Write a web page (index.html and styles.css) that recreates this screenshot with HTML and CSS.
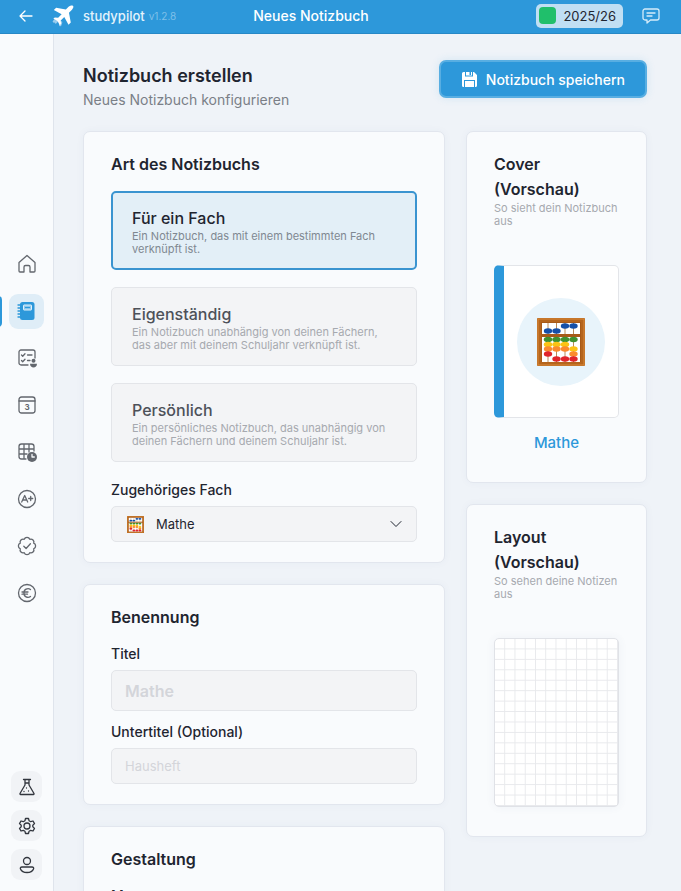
FILE: index.html
```
<!DOCTYPE html>
<html lang="de">
<head>
    <meta charset="UTF-8">
    <meta name="viewport" content="width=device-width, initial-scale=1">
    <title>Neues Notizbuch - studypilot</title>
    <link rel="stylesheet" href="styles.css">
</head>
<body>

<!-- shared abacus drawing -->
<svg class="sprite" aria-hidden="true">
    <symbol id="abacus" viewBox="0 0 48 48">
        <rect width="48" height="48" rx="1" fill="#b5651d"/>
        <rect x="1" y="1" width="46" height="46" fill="none" stroke="#d98a3a"/>
        <rect x="4" y="4" width="40" height="40" fill="#a85a18"/>
        <rect x="5" y="5" width="38" height="11" fill="#fff"/>
        <rect x="5" y="19" width="38" height="25" fill="#fff"/>
        <path d="M11 5v11M19.500 5v11M28 5v11M36.500 5v11M11 19v25M19.500 19v25M28 19v25M36.500 19v25" stroke="#b98b5a"/>
        <g fill="#1550a8">
            <ellipse cx="11" cy="13" rx="4.200" ry="2.700"/><ellipse cx="19.500" cy="13" rx="4.200" ry="2.700"/>
            <ellipse cx="28" cy="8" rx="4.200" ry="2.700"/><ellipse cx="36.500" cy="8" rx="4.200" ry="2.700"/>
        </g>
        <g fill="#3f9130">
            <ellipse cx="11" cy="21.500" rx="4.200" ry="2.700"/><ellipse cx="19.500" cy="21.500" rx="4.200" ry="2.700"/>
            <ellipse cx="28" cy="21.500" rx="4.200" ry="2.700"/><ellipse cx="36.500" cy="21.500" rx="4.200" ry="2.700"/>
        </g>
        <g fill="#fbc315">
            <ellipse cx="11" cy="26.500" rx="4.200" ry="2.700"/><ellipse cx="19.500" cy="26.500" rx="4.200" ry="2.700"/>
            <ellipse cx="28" cy="26.500" rx="4.200" ry="2.700"/><ellipse cx="36.500" cy="31" rx="4.200" ry="2.700"/>
        </g>
        <g fill="#fb8a2e">
            <ellipse cx="11" cy="31" rx="4.200" ry="2.700"/><ellipse cx="19.500" cy="31" rx="4.200" ry="2.700"/>
            <ellipse cx="28" cy="31" rx="4.200" ry="2.700"/><ellipse cx="36.500" cy="36" rx="4.200" ry="2.700"/>
        </g>
        <g fill="#e0242c">
            <ellipse cx="11" cy="36" rx="4.200" ry="2.700"/><ellipse cx="19.500" cy="41" rx="4.200" ry="2.700"/>
            <ellipse cx="28" cy="41" rx="4.200" ry="2.700"/><ellipse cx="36.500" cy="41" rx="4.200" ry="2.700"/>
        </g>
    </symbol>
</svg>

<header class="topbar">
    <div class="topbar_left">
        <a class="back" href="#" aria-label="Zurück">
            <svg class="icon" width="16" height="16" viewBox="0 0 16 16"><path d="M14 8H2M7 3L2 8l5 5"/></svg>
        </a>
        <a class="brand" href="#">
            <svg width="22" height="22" viewBox="0 0 24 24">
                <path fill="none" stroke="#9bcdee" stroke-width="2.500" stroke-linecap="round" d="M7 16l-3 3M10 19l-1 3M3 17l-1 1"/>
                <path fill="#fff" d="M23 1c-1.300-1.100-3.600-.3-4.900 1l-3 3L4.500 3 2 5.500l8.500 4.600L6.700 14l-3.700-.5-1.500 1.500 4.500 2.500L8.500 22l1.500-1.500-.5-3.700 3.900-3.800L18 21.500l2.500-2.500-2-10.600 3-3C22.800 4.100 24 2 23 1z"/>
            </svg>
            <span class="brand_name">studypilot</span>
            <span class="version">v1.2.8</span>
        </a>
    </div>
    <div class="topbar_title">Neues Notizbuch</div>
    <div class="topbar_right">
        <button class="year" type="button"><span class="year_color"></span>2025/26</button>
        <button class="feedback" type="button" aria-label="Feedback">
            <svg class="icon" width="18" height="18" viewBox="0 0 18 18"><path d="M3 2h12a2 2 0 0 1 2 2v7a2 2 0 0 1-2 2H8.500L5 16v-3H3a2 2 0 0 1-2-2V4a2 2 0 0 1 2-2zM5 6h8M5 9h5"/></svg>
        </button>
    </div>
</header>

<div class="layout">
    <aside class="sidebar">
        <nav class="nav">
            <a href="#" aria-label="Start">
                <svg class="icon" width="20" height="20" viewBox="0 0 20 20"><path d="M2 8.500L10 1.500l8 7V17a1 1 0 0 1-1 1h-4v-5a1.500 1.500 0 0 0-1.500-1.500h-3A1.500 1.500 0 0 0 7 13v5H3a1 1 0 0 1-1-1z"/></svg>
            </a>
            <a class="active" href="#" aria-label="Notizbücher">
                <svg width="20" height="20" viewBox="0 0 20 20">
                    <rect x="3" y="1" width="14.500" height="18" rx="2.500" fill="#2d98da"/>
                    <path d="M1 4h3M1 7h3M1 10h3M1 13h3M1 16h3" stroke="#2d98da" stroke-width="1.300" stroke-linecap="round"/>
                    <rect x="6.500" y="4" width="8" height="5" rx=".5" fill="#8cc7ec" stroke="#e2f1fa"/>
                    <path d="M8 6.500h5" stroke="#2d98da"/>
                </svg>
            </a>
            <a href="#" aria-label="Aufgaben">
                <svg class="icon" width="20" height="20" viewBox="0 0 20 20">
                    <path d="M11 17H4a2 2 0 0 1-2-2V4a2 2 0 0 1 2-2h12a2 2 0 0 1 2 2v6M4.500 7l1.200 1.200L8 5.700M10.500 7H15M4.500 12.500l1.200 1.200L8 11.200M10.500 12.500H13"/>
                    <circle class="solid" cx="16.500" cy="12.800" r="2"/><path class="solid" d="M13 15.700h7c0 5-7 5-7 0z"/>
                </svg>
            </a>
            <a href="#" aria-label="Kalender">
                <svg class="icon" width="20" height="20" viewBox="0 0 20 20">
                    <rect x="2" y="2" width="16" height="16" rx="2.500"/><path d="M2 6h16"/>
                    <text x="10" y="15" text-anchor="middle">3</text>
                </svg>
            </a>
            <a href="#" aria-label="Stundenplan">
                <svg class="icon" width="20" height="20" viewBox="0 0 20 20">
                    <path d="M9 17H4.500A2.500 2.500 0 0 1 2 14.500v-10A2.500 2.500 0 0 1 4.500 2h10A2.500 2.500 0 0 1 17 4.500V9M2 7h15M2 12h8M7 2v15M12 2v8"/>
                    <circle class="solid" cx="15" cy="15" r="5"/><path class="hand" d="M15 12.500V15h2.300"/>
                </svg>
            </a>
            <a href="#" aria-label="Noten">
                <svg class="icon" width="20" height="20" viewBox="0 0 20 20">
                    <circle cx="10" cy="10" r="8.500"/>
                    <path d="M4.700 13L7.700 6.500l3 6.500M5.800 11h3.800M11.700 9.500h4M13.700 7.500v4"/>
                </svg>
            </a>
            <a href="#" aria-label="Erledigt">
                <svg class="icon" width="20" height="20" viewBox="0 0 20 20">
                    <path d="M7.200 3.300a3 3 0 0 1 5.600 0a3 3 0 0 1 3.900 3.900a3 3 0 0 1 0 5.600a3 3 0 0 1-3.900 3.900a3 3 0 0 1-5.600 0a3 3 0 0 1-3.900-3.900a3 3 0 0 1 0-5.600a3 3 0 0 1 3.900-3.900z"/>
                    <path d="M6.800 10.200l2.300 2.300 4.300-4.700"/>
                </svg>
            </a>
            <a href="#" aria-label="Finanzen">
                <svg class="icon" width="20" height="20" viewBox="0 0 20 20">
                    <circle cx="10" cy="10" r="8.500"/>
                    <path d="M13.500 6.500a4 4 0 0 0-6.500 3.500 4 4 0 0 0 6.500 3.500M5 9h6M5 11.200h5.500"/>
                </svg>
            </a>
        </nav>
        <div class="tools">
            <button type="button" aria-label="Labor">
                <svg class="icon" width="18" height="18" viewBox="0 0 18 18"><path d="M5.500 1.500h7M7 1.500V7L2 15.500a.7.7 0 0 0 .6 1h12.800a.7.7 0 0 0 .6-1L11 7V1.500M7 5h4"/><path d="M8.500 10v.1M6 13.500v.1M10.500 13v.1"/></svg>
            </button>
            <button type="button" aria-label="Einstellungen">
                <svg class="icon" width="18" height="18" viewBox="0 0 18 18"><path d="M7.500 1.500h3l.6 2.300 1.600.9 2.300-.7 1.500 2.600-1.700 1.600v1.600l1.700 1.600-1.500 2.600-2.300-.7-1.600.9-.6 2.300h-3l-.6-2.300-1.600-.9-2.300.7-1.500-2.600 1.700-1.600V8.200L1.500 6.600 3 4l2.300.7 1.600-.9z"/><circle cx="9" cy="9" r="3"/></svg>
            </button>
            <button type="button" aria-label="Profil">
                <svg class="icon" width="18" height="18" viewBox="0 0 18 18"><circle cx="9" cy="5" r="3.500"/><path d="M4 11h10c1.500 0 2 1 1.500 2-1 2.500-3.500 3.500-6.500 3.500S3.500 15.500 2.500 13c-.5-1 0-2 1.500-2z"/></svg>
            </button>
        </div>
    </aside>

    <main class="content">
        <div class="page_head">
            <div>
                <h1>Notizbuch erstellen</h1>
                <p>Neues Notizbuch konfigurieren</p>
            </div>
            <button class="save" type="submit" form="notebook">
                <svg width="17" height="17" viewBox="0 0 17 17">
                    <path fill="#fff" d="M2.500 1H4v4.500h8V1h1l3 3v10.500a1.500 1.500 0 0 1-1.500 1.500H14V9H3v7h-.5A1.500 1.500 0 0 1 1 14.500v-12A1.500 1.500 0 0 1 2.500 1zM5 1h3.500v3H10V1h1v3.500H5zM4 10h9v6H4z"/>
                </svg>
                Notizbuch speichern
            </button>
        </div>

        <div class="columns">
            <form class="column" id="notebook">
                <section class="card">
                    <h2>Art des Notizbuchs</h2>
                    <div class="options">
                        <label class="option">
                            <input type="radio" name="kind" value="subject" checked>
                            <span class="option_title">Für ein Fach</span>
                            <span class="option_text">Ein Notizbuch, das mit einem bestimmten Fach verknüpft ist.</span>
                        </label>
                        <label class="option">
                            <input type="radio" name="kind" value="standalone">
                            <span class="option_title">Eigenständig</span>
                            <span class="option_text">Ein Notizbuch unabhängig von deinen Fächern, das aber mit deinem Schuljahr verknüpft ist.</span>
                        </label>
                        <label class="option">
                            <input type="radio" name="kind" value="personal">
                            <span class="option_title">Persönlich</span>
                            <span class="option_text">Ein persönliches Notizbuch, das unabhängig von deinen Fächern und deinem Schuljahr ist.</span>
                        </label>
                    </div>
                    <div class="field field_subject">
                        <label for="subject">Zugehöriges Fach</label>
                        <div class="select">
                            <svg class="select_icon" width="17" height="17"><use href="#abacus"/></svg>
                            <select id="subject">
                                <option>Mathe</option>
                            </select>
                            <svg class="icon" width="12" height="12" viewBox="0 0 12 12"><path d="M1 3.500l5 5 5-5"/></svg>
                        </div>
                    </div>
                </section>

                <section class="card">
                    <h2>Benennung</h2>
                    <div class="field">
                        <label for="title">Titel</label>
                        <input class="input_big" id="title" type="text" placeholder="Mathe">
                    </div>
                    <div class="field">
                        <label for="subtitle">Untertitel (Optional)</label>
                        <input id="subtitle" type="text" placeholder="Hausheft">
                    </div>
                </section>

                <section class="card">
                    <h2>Gestaltung</h2>
                    <div class="field">
                        <label for="pattern">Muster</label>
                        <input id="pattern" type="text">
                    </div>
                </section>
            </form>

            <div class="column">
                <section class="card preview">
                    <h2>Cover (Vorschau)</h2>
                    <p>So sieht dein Notizbuch aus</p>
                    <div class="cover">
                        <div class="cover_circle">
                            <svg width="48" height="48"><use href="#abacus"/></svg>
                        </div>
                    </div>
                    <div class="cover_name">Mathe</div>
                </section>

                <section class="card preview">
                    <h2>Layout (Vorschau)</h2>
                    <p>So sehen deine Notizen aus</p>
                    <div class="paper"></div>
                </section>
            </div>
        </div>
    </main>
</div>

</body>
</html>
```

FILE: styles.css
```
* {
    box-sizing: border-box;
}

body {
    margin: 0;
    height: 100vh;
    display: flex;
    flex-direction: column;
    overflow: hidden;
    background: #eff3f8;
    color: #1f2530;
    font-family: Inter, "Liberation Sans", sans-serif;
    font-size: 14px;
}

h1, h2, p {
    margin: 0;
}

a {
    color: inherit;
    text-decoration: none;
}

button, input, select {
    font: inherit;
    color: inherit;
}

button {
    border: 0;
    padding: 0;
    background: none;
    cursor: pointer;
}

svg {
    display: block;
    flex: none;
}

.sprite {
    display: none;
}

.icon {
    fill: none;
    stroke: currentColor;
    stroke-width: 1.3;
    stroke-linecap: round;
    stroke-linejoin: round;
}

/* top bar */
.topbar {
    flex: none;
    display: flex;
    align-items: center;
    height: 34px;
    padding: 0 21px 2px 18px;
    background: #2d98da;
    border-bottom: 1px solid #2788c6;
    color: #fff;
}

.topbar_left {
    flex: 1 1 234px;
    display: flex;
    align-items: center;
    gap: 18px;
}

.brand {
    display: flex;
    align-items: center;
    color: #e4f3fc;
}

.brand_name {
    margin-left: 9px;
    font-size: 13px;
    font-weight: 500;
}

.version {
    margin-left: 4px;
    font-size: 10px;
    color: #7fc0e9;
}

.topbar_title {
    font-size: 14px;
    font-weight: 500;
    white-space: nowrap;
}

.topbar_right {
    flex: 1 1 290px;
    display: flex;
    align-items: center;
    justify-content: flex-end;
    gap: 19px;
}

.year {
    display: flex;
    align-items: center;
    gap: 7px;
    height: 24px;
    padding: 0 7px 0 3px;
    border-radius: 5px;
    background: #c0dff3;
    color: #1f2530;
    font-size: 13px;
}

.year_color {
    width: 17px;
    height: 17px;
    border-radius: 4px;
    background: #20bf6b;
}

.feedback {
    color: #d5ecfa;
}

/* sidebar */
.layout {
    flex: 1;
    display: flex;
    min-height: 0;
}

.sidebar {
    flex: none;
    display: flex;
    flex-direction: column;
    width: 54px;
    padding: 52px 0 11px;
    background: #f9fbfd;
    border-right: 1px solid #dfe4ec;
    color: #63676e;
}

.nav {
    flex: 1;
    display: flex;
    flex-direction: column;
    align-items: center;
    justify-content: center;
    gap: 12px;
}

.nav a {
    position: relative;
    display: flex;
    align-items: center;
    justify-content: center;
    width: 35px;
    height: 35px;
    border-radius: 9px;
}

.nav .active {
    background: #dfedf7;
}

.nav .active::before {
    content: "";
    position: absolute;
    left: -11px;
    width: 4px;
    height: 31px;
    border-radius: 0 4px 4px 0;
    background: #2d98da;
}

.icon text {
    fill: currentColor;
    stroke: none;
    font-size: 8px;
    font-weight: 700;
}

.icon .solid {
    fill: currentColor;
    stroke: none;
}

.icon .hand {
    stroke: #f9fbfd;
}

.tools {
    display: flex;
    flex-direction: column;
    align-items: center;
    gap: 8px;
}

.tools button {
    display: flex;
    align-items: center;
    justify-content: center;
    width: 31px;
    height: 31px;
    border-radius: 9px;
    background: #f1f3f6;
    color: #32363e;
}

/* content */
.content {
    flex: 1;
    min-width: 0;
    padding: 26px 34px 20px 29px;
    overflow-y: auto;
    scrollbar-width: none;
}

.page_head {
    display: flex;
    align-items: flex-start;
    justify-content: space-between;
    margin-bottom: 20px;
}

h1 {
    margin-top: 3px;
    font-size: 18px;
    font-weight: 600;
    line-height: 26px;
}

.page_head p {
    color: #7a7f87;
    font-size: 14px;
    line-height: 22px;
}

.save {
    display: flex;
    align-items: center;
    gap: 8px;
    height: 38px;
    padding: 0 20px;
    border: 2px solid #58aee2;
    border-radius: 7px;
    background: #2d98da;
    box-shadow: 0 0 8px rgba(45, 152, 218, .15);
    color: #fff;
    font-size: 14px;
    font-weight: 500;
    white-space: nowrap;
}

.columns {
    display: grid;
    grid-template-columns: 2fr 1fr;
    align-items: start;
    gap: 21px;
}

.column {
    display: flex;
    flex-direction: column;
    gap: 21px;
    min-width: 0;
}

.card {
    padding: 20px 27px;
    border: 1px solid #e2e6ee;
    border-radius: 7px;
    background: #f9fbfd;
    box-shadow: 0 0 8px rgba(60, 80, 120, .04);
}

h2 {
    font-size: 16px;
    font-weight: 600;
    line-height: 25px;
}

.options {
    display: flex;
    flex-direction: column;
    gap: 17px;
    margin-top: 14px;
}

.option {
    display: block;
    padding: 15px 20px 13px;
    border: 1px solid #e3e5e9;
    border-radius: 5px;
    background: #f3f4f6;
    color: #4d5159;
    cursor: pointer;
}

.option input {
    position: absolute;
    opacity: 0;
}

.option_title {
    display: block;
    margin-bottom: 1px;
    font-size: 16px;
    font-weight: 500;
    line-height: 22px;
}

.option_text {
    display: block;
    color: #a6a9af;
    font-size: 11px;
    line-height: 13px;
}

.option:has(input:checked) {
    padding: 14px 19px 12px;
    border: 2px solid #3a94d0;
    background: #e3eff7;
    color: #1f2530;
}

.option:has(input:checked) .option_text {
    color: #7f8891;
}

.field {
    margin-top: 14px;
}

.field + .field {
    margin-top: 11px;
}

.field_subject {
    margin-top: 18px;
}

.field label {
    display: block;
    margin-bottom: 6px;
    font-size: 14px;
    font-weight: 500;
    line-height: 20px;
}

.field input,
.select {
    width: 100%;
    height: 36px;
    border: 1px solid #e3e5e9;
    border-radius: 5px;
    background: #f3f4f6;
    font-size: 13px;
}

.field input {
    display: block;
    padding: 0 13px;
}

.field .input_big {
    height: 41px;
    font-size: 16px;
    font-weight: 600;
}

.field input::placeholder {
    color: #d3d5da;
}

.select {
    display: grid;
    grid-template-columns: 17px 1fr 12px;
    align-items: center;
    padding: 0 14px 0 15px;
}

.select select {
    grid-area: 1 / 1 / 2 / 4;
    width: 100%;
    height: 34px;
    padding: 0 0 0 29px;
    border: 0;
    background: none;
    appearance: none;
}

.select_icon {
    grid-area: 1 / 1;
}

.select .icon {
    grid-area: 1 / 3;
    stroke-width: 1;
    pointer-events: none;
}

/* previews */
.preview {
    padding-bottom: 29px;
}

.preview p {
    margin-bottom: 37px;
    color: #a6a9af;
    font-size: 11px;
    line-height: 13px;
}

.cover {
    display: flex;
    align-items: center;
    justify-content: center;
    height: 153px;
    border: 1px solid #e3e5e9;
    border-left: 10px solid #2d98da;
    border-radius: 5px;
    background: #fff;
}

.cover_circle {
    display: flex;
    align-items: center;
    justify-content: center;
    width: 88px;
    height: 88px;
    border-radius: 50%;
    background: #e8f4fb;
}

.cover_name {
    margin-top: 14px;
    color: #2d98da;
    font-size: 15px;
    font-weight: 500;
    line-height: 21px;
    text-align: center;
}

.paper {
    height: 169px;
    border: 1px solid #e0e2e7;
    border-radius: 5px;
    background-color: #fff;
    background-image:
        linear-gradient(#e8e9ec 1px, transparent 1px),
        linear-gradient(90deg, #e8e9ec 1px, transparent 1px);
    background-size: calc(100% / 12) calc(100% / 16);
    background-position: -1px -1px;
    box-shadow: 0 0 10px rgba(60, 80, 120, .06);
}
```
